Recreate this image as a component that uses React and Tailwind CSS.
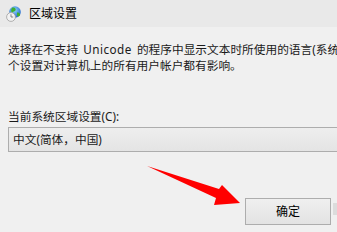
import React from 'react';

function GlobeIcon() {
    return (
        <svg width="15" height="16" viewBox="0 0 15 16">
            <defs>
                <radialGradient id="g" cx="0.45" cy="0.35" r="0.7">
                    <stop offset="0" stopColor="#8fd8ff" />
                    <stop offset="1" stopColor="#1a5fc8" />
                </radialGradient>
            </defs>
            <circle cx="9" cy="6" r="5.8" fill="url(#g)" />
            <path d="M6.5 1.5 C8.5 1 10.5 2.5 9.5 4.5 C8.5 6 7 5 6.5 7 C5 6 4.5 3 6.5 1.5 Z" fill="#3fae2f" />
            <path d="M11 6.5 C13 6 14.5 7.5 14 9.5 C12.5 11 11 10.5 11 9 Z" fill="#3fae2f" />
            <circle cx="5" cy="11" r="4.4" fill="#f2f2f2" stroke="#a0a0a0" strokeWidth="0.8" />
            <path d="M5 8.3 V11 H7.2" stroke="#6a6a6a" strokeWidth="0.8" fill="none" />
        </svg>
    );
}

export default function App() {
    return (
        <div
            className="relative w-[337px] h-[232px] overflow-hidden bg-[#f0f0f0] text-[#1a1a1a]"
            style={{ fontFamily: '"Noto Sans", "Noto Sans CJK SC", sans-serif' }}
        >
            {/* Title bar */}
            <div className="h-[27px] bg-[#e9e9e9] flex items-center pl-[6px] gap-[8px]">
                <GlobeIcon />
                <span className="text-[12px] text-black leading-none">区域设置</span>
            </div>

            {/* Body */}
            <div className="pl-[8px] pt-[14px]">
                <p className="text-[11.7px] leading-[16px] whitespace-nowrap">
                    选择在不支持<span className="mx-[5px] tracking-[0.5px]">Unicode</span>的程序中显示文本时所使用的语言(系统区域设置)。这
                </p>
                <p className="text-[11.7px] leading-[16px] whitespace-nowrap">
                    个设置对计算机上的所有用户帐户都有影响。
                </p>

                <p className="text-[11.7px] leading-[16px] mt-[35px] whitespace-nowrap">当前系统区域设置(C):</p>

                <div className="mt-[3px] h-[25px] w-[340px] border border-[#adadad] bg-gradient-to-b from-[#eeeeee] to-[#e4e4e4] flex items-center pl-[4px]">
                    <span className="text-[11.7px] leading-none">中文(简体，中国)</span>
                </div>
            </div>

            {/* Footer button */}
            <div className="flex justify-end items-start pr-[6px] mt-[46px]">
                <button className="w-[86px] h-[27px] border border-[#adadad] bg-gradient-to-b from-[#efefef] to-[#e3e3e3] text-[12px] text-black flex items-center justify-center">
                    确定
                </button>
            </div>
            <div className="absolute right-0 top-[203px] w-[4px] h-[12px] bg-[#dcdcdc]" />

            {/* Red annotation arrow */}
            <svg className="absolute left-0 top-0 pointer-events-none" width="337" height="232">
                <polygon
                    points="147,166 219,189 222,185 240,203 214,205 216,198"
                    fill="#ff0000"
                />
            </svg>
        </div>
    );
}
